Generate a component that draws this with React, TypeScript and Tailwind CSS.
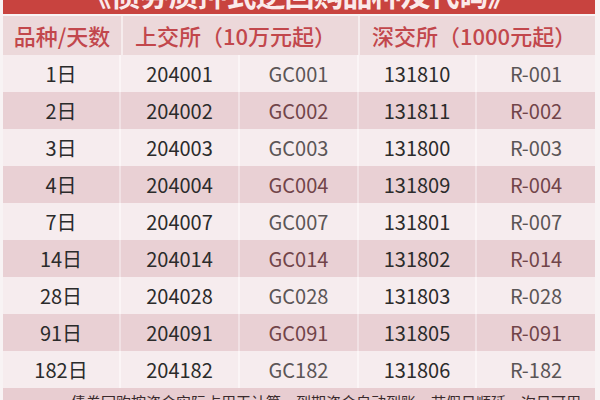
import React from "react";

const rows = [
  ["1日", "204001", "GC001", "131810", "R-001"],
  ["2日", "204002", "GC002", "131811", "R-002"],
  ["3日", "204003", "GC003", "131800", "R-003"],
  ["4日", "204004", "GC004", "131809", "R-004"],
  ["7日", "204007", "GC007", "131801", "R-007"],
  ["14日", "204014", "GC014", "131802", "R-014"],
  ["28日", "204028", "GC028", "131803", "R-028"],
  ["91日", "204091", "GC091", "131805", "R-091"],
  ["182日", "204182", "GC182", "131806", "R-182"],
];

export default function App() {
  return (
    <div
      className="w-[600px] h-[400px] overflow-hidden bg-[#f8f3f4] pl-[3px] pr-[5px]"
      style={{ fontFamily: '"Noto Sans CJK SC", "Noto Sans", sans-serif' }}
    >
      <div className="h-[14px] overflow-hidden bg-[#c8433f] flex justify-center">
        <div className="mt-[-25px] text-[30px] leading-[36px] font-bold text-[#fbeaea] tracking-[-1px] whitespace-nowrap">
          《债券质押式逆回购品种及代码》
        </div>
      </div>
      <div className="h-[2px]" />
      <div className="grid grid-cols-[120px_237px_235px] h-[39px] bg-[#ecd8da] text-[#c2474c] text-[22px] font-medium">
        <div className="flex items-center justify-center border-r-2 border-[#f6eced]">品种/天数</div>
        <div className="flex items-center pl-[12px] border-r-2 border-[#f6eced]">上交所（10万元起）</div>
        <div className="flex items-center pl-[12px]">深交所（1000元起）</div>
      </div>
      {rows.map((r, i) => {
        const dark = i % 2 === 1;
        return (
          <div
            key={i}
            className={`grid grid-cols-[118px_119px_119px_118px_118px] h-[37px] text-[20px] ${
              dark ? "bg-[#e9d0d4]" : "bg-[#f6ecee]"
            }`}
          >
            {r.map((c, j) => (
              <div
                key={j}
                className={`flex items-center justify-center ${j < 4 ? "border-r-2" : ""} ${
                  dark ? "border-[#f1e1e4]" : "border-[#fbf5f6]"
                } ${
                  j === 2 || j === 4
                    ? dark
                      ? "text-[#714449]"
                      : "text-[#5b5556]"
                    : "text-[#2b2b2b]"
                }`}
              >
                {c}
              </div>
            ))}
          </div>
        );
      })}
      <div className="h-[20px] bg-[#e8cdd1] pl-[68px] pt-[4px] text-[15px] leading-[20px] text-[#3a2a2c] whitespace-nowrap overflow-hidden">
        债券回购按资金实际占用天计算，到期资金自动到账，节假日顺延，次日可用。
      </div>
    </div>
  );
}
